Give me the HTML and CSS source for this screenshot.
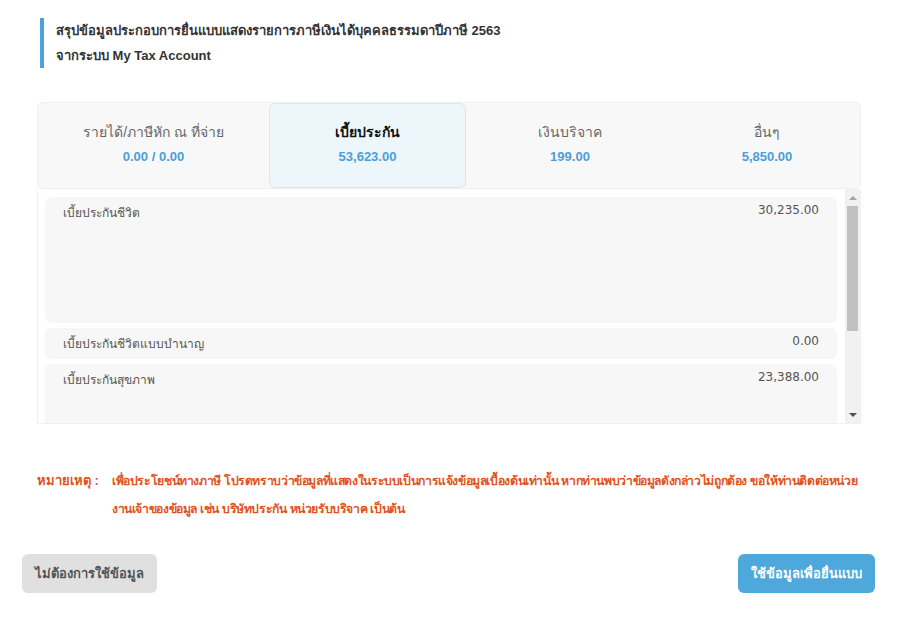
FILE: index.html
```html
<!DOCTYPE html>
<html lang="th">
<head>
    <meta charset="UTF-8">
    <meta name="viewport" content="width=device-width, initial-scale=1.0">
    <title>My Tax Account</title>
    <link rel="stylesheet" href="styles.css">
</head>
<body>
    <div class="content">
        <div class="page-title">
            <div>สรุปข้อมูลประกอบการยื่นแบบแสดงรายการภาษีเงินได้บุคคลธรรมดาปีภาษี 2563</div>
            <div>จากระบบ My Tax Account</div>
        </div>

        <div class="tabs">
            <div class="tab">
                <div class="tab-label">รายได้/ภาษีหัก ณ ที่จ่าย</div>
                <div class="tab-value">0.00 / 0.00</div>
            </div>
            <div class="tab active">
                <div class="tab-label">เบี้ยประกัน</div>
                <div class="tab-value">53,623.00</div>
            </div>
            <div class="tab">
                <div class="tab-label">เงินบริจาค</div>
                <div class="tab-value">199.00</div>
            </div>
            <div class="tab">
                <div class="tab-label">อื่นๆ</div>
                <div class="tab-value">5,850.00</div>
            </div>
        </div>

        <div class="list-wrap">
            <div class="item-list">
                <div class="item item-tall">
                    <span>เบี้ยประกันชีวิต</span>
                    <span>30,235.00</span>
                </div>
                <div class="item">
                    <span>เบี้ยประกันชีวิตแบบบำนาญ</span>
                    <span>0.00</span>
                </div>
                <div class="item item-tall">
                    <span>เบี้ยประกันสุขภาพ</span>
                    <span>23,388.00</span>
                </div>
            </div>
            <div class="scrollbar">
                <div class="scroll-arrow up"></div>
                <div class="scroll-track">
                    <div class="scroll-thumb"></div>
                </div>
                <div class="scroll-arrow down"></div>
            </div>
        </div>

        <div class="note">
            <div class="note-label">หมายเหตุ :</div>
            <div class="note-text">เพื่อประโยชน์ทางภาษี โปรดทราบว่าข้อมูลที่แสดงในระบบเป็นการแจ้งข้อมูลเบื้องต้นเท่านั้น หากท่านพบว่าข้อมูลดังกล่าวไม่ถูกต้อง ขอให้ท่านติดต่อหน่วย<br>งานเจ้าของข้อมูล เช่น บริษัทประกัน หน่วยรับบริจาค เป็นต้น</div>
        </div>
    </div>

    <div class="button-group">
        <button type="button" class="button cancel-button">ไม่ต้องการใช้ข้อมูล</button>
        <button type="button" class="button use-button">ใช้ข้อมูลเพื่อยื่นแบบ</button>
    </div>
</body>
</html>
```

FILE: styles.css
```css
body {
    margin: 0;
    padding: 0;
    background-color: #fff;
    color: #333;
    font-family: "Liberation Sans", "Noto Sans", sans-serif;
}

.content {
    padding: 18px 39px 0 37px;
}

.page-title {
    margin-left: 3px;
    padding-left: 12px;
    border-left: 4px solid #4aa3df;
    font-size: 13px;
    font-weight: 600;
    line-height: 25px;
    color: #333;
}

.tabs {
    display: grid;
    grid-template-columns: 231px 197px 208px 1fr;
    margin-top: 34px;
    height: 87px;
    background-color: #f8f8f8;
    border: 1px solid #f0f0f0;
    border-radius: 6px;
    box-sizing: border-box;
}

.tab {
    display: flex;
    flex-direction: column;
    align-items: center;
    padding-top: 18px;
    box-sizing: border-box;
}

.tab.active {
    background-color: #edf6fb;
    border: 1px solid #d5e9f5;
    border-radius: 6px;
    padding-top: 17px;
}

.tab-label {
    font-size: 14px;
    color: #666;
    line-height: 22px;
}

.tab.active .tab-label {
    color: #111;
    font-weight: 600;
}

.tab-value {
    margin-top: 6px;
    font-size: 13px;
    font-weight: bold;
    color: #4a9fd8;
}

.list-wrap {
    display: flex;
    height: 235px;
    border: 1px solid #f0f0f0;
    border-top: none;
    box-sizing: border-box;
}

.item-list {
    flex: 1;
    overflow: hidden;
    padding: 8px 8px 0 7px;
    display: flex;
    flex-direction: column;
    gap: 5px;
}

.item {
    flex-shrink: 0;
    display: flex;
    justify-content: space-between;
    align-items: flex-start;
    height: 31px;
    padding: 6px 18px 0 18px;
    box-sizing: border-box;
    background-color: #f7f7f7;
    border-radius: 6px;
    font-family: "DejaVu Sans", sans-serif;
    font-size: 12px;
    color: #555;
}

.item-tall {
    height: 126px;
}

/* fake scrollbar */
.scrollbar {
    width: 15px;
    display: flex;
    flex-direction: column;
    background-color: #f1f1f1;
}

.scroll-arrow {
    height: 17px;
    display: flex;
    justify-content: center;
    align-items: center;
}

.scroll-arrow.up::before {
    content: "";
    border-left: 4px solid transparent;
    border-right: 4px solid transparent;
    border-bottom: 4px solid #a3a3a3;
}

.scroll-arrow.down::before {
    content: "";
    border-left: 4px solid transparent;
    border-right: 4px solid transparent;
    border-top: 4px solid #505050;
}

.scroll-track {
    flex: 1;
    padding: 0 2px;
}

.scroll-thumb {
    height: 125px;
    background-color: #c1c1c1;
}

.note {
    display: grid;
    grid-template-columns: 75px 1fr;
    margin-top: 43px;
    font-size: 13px;
    line-height: 28px;
    color: #e0531d;
}

.note-label {
    font-weight: 600;
}

.note-text {
    white-space: nowrap;
    font-size: 12.2px;
    font-weight: 600;
    letter-spacing: -0.38px;
}

.button-group {
    display: flex;
    justify-content: space-between;
    padding: 31px 25px 0 22px;
}

.button {
    height: 39px;
    padding: 0 13px;
    border: none;
    border-radius: 6px;
    font-family: "Liberation Sans", "Noto Sans", sans-serif;
    font-size: 13px;
    font-weight: 600;
    cursor: pointer;
}

.cancel-button {
    background-color: #e0e0e0;
    color: #555;
}

.use-button {
    background-color: #4ea8dc;
    color: #fff;
}
```
